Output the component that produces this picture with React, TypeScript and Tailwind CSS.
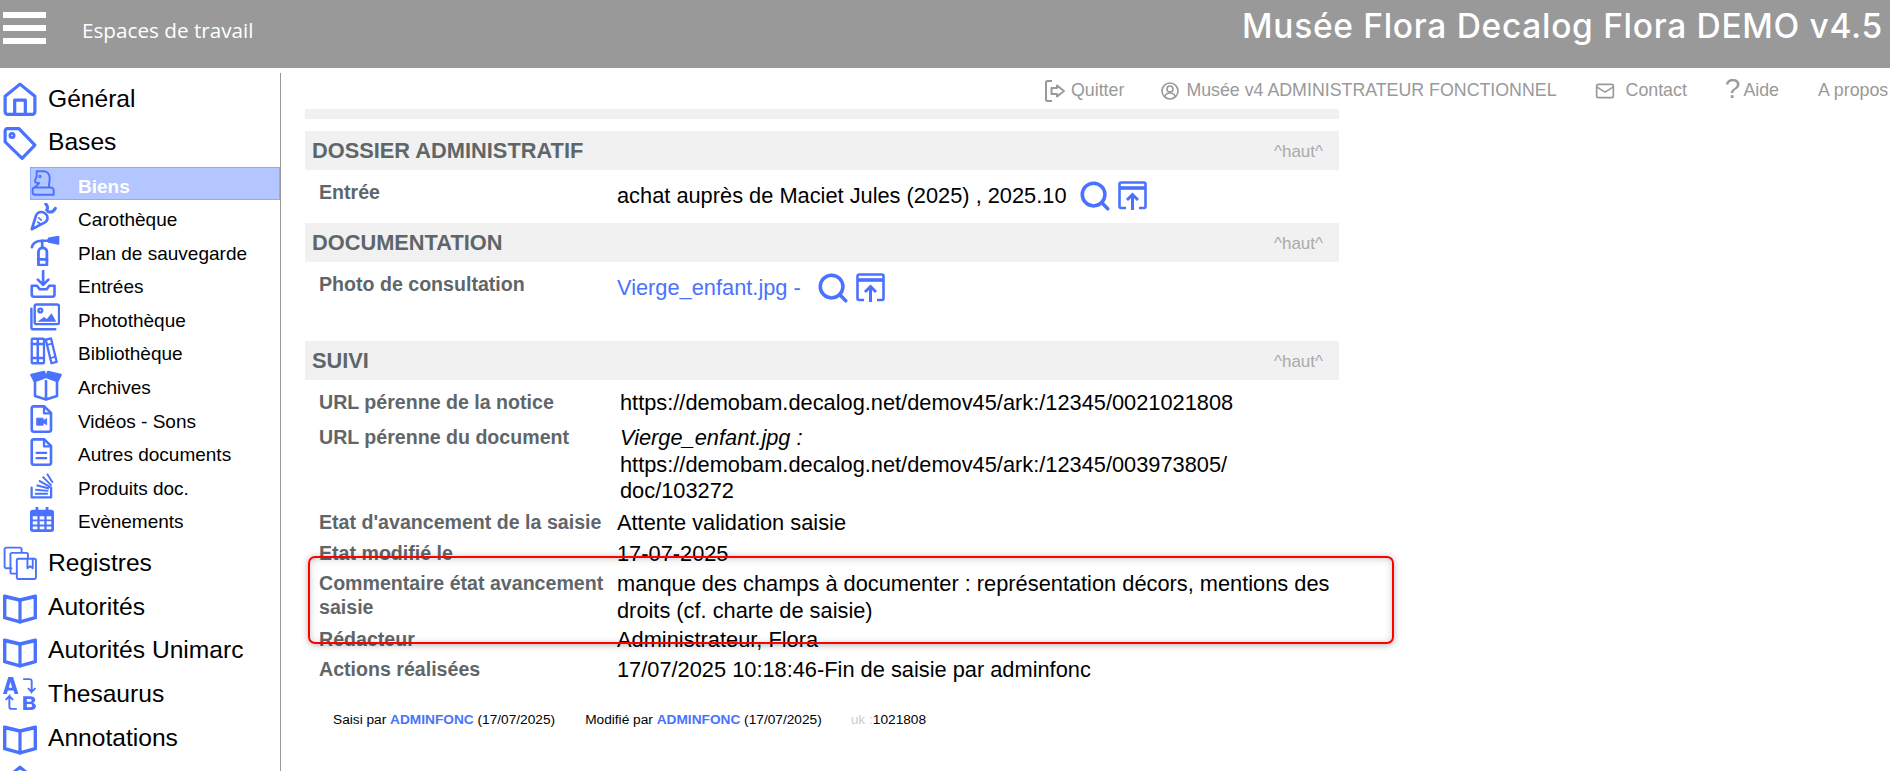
import type { ReactNode } from "react";
import { Mail, Search } from "lucide-react";

const blue = "#4a72ff";

function Ico({ size, children, cls = "" }: { size: number; children: ReactNode; cls?: string }) {
  return (
    <svg
      width={size}
      height={size}
      viewBox="0 0 32 32"
      fill="none"
      stroke={blue}
      strokeWidth="2.6"
      strokeLinejoin="round"
      strokeLinecap="round"
      className={cls}
    >
      {children}
    </svg>
  );
}

const HomeIcon = (
  <Ico size={34}>
    <path d="M2 13.5 16 2l14 11.5V28a2.5 2.5 0 0 1-2.5 2.5h-23A2.5 2.5 0 0 1 2 28z" strokeWidth="3" />
    <path d="M11 30V17h10v13" strokeWidth="3" />
  </Ico>
);
const TagIcon = (
  <Ico size={34}>
    <path d="M2 4.5A2 2 0 0 1 4 2.5h11l15 15.500L18 30.500 2 15z" strokeWidth="3" />
    <circle cx="8.500" cy="9" r="2" />
  </Ico>
);
const BookIcon = (
  <Ico size={34}>
    <path d="M1.500 6 16 9.500 30.500 6v20L16 30 1.500 26z" strokeWidth="3.400" />
    <path d="M16 9.500V30" strokeWidth="3" />
  </Ico>
);
const RegistresIcon = (
  <Ico size={34}>
    <path d="M8 21H3a1.500 1.500 0 0 1-1.500-1.500V3A1.500 1.500 0 0 1 3 1.500h13a1.500 1.500 0 0 1 1.500 1.500v3" strokeWidth="1.800" />
    <path d="M13 26H8.500A1.500 1.500 0 0 1 7 24.500V8a1.500 1.500 0 0 1 1.500-1.500H22A1.500 1.500 0 0 1 23.500 8v3" strokeWidth="1.800" />
    <rect x="13" y="12" width="18" height="19" rx="1.500" strokeWidth="1.800" />
    <path d="M23 12v9l2.500-2 2.500 2v-9" strokeWidth="1.800" />
  </Ico>
);
const ThesaurusIcon = (
  <svg width="34" height="34" viewBox="0 0 32 32" fill={blue}>
    <path d="M0 15 5-1h4.500l5 16h-3.600l-.9-3.200H4.500L3.600 15zm5.400-6h3.200L7 3.500z" transform="translate(0 1)" />
    <path d="M19 2h6c1.500 0 2 .8 2 2v10l3.500-3.500M27 14l-3.500-3.500" fill="none" stroke={blue} strokeWidth="1.800" />
    <path d="M13 30H8c-1.500 0-2-.8-2-2V18l-3.500 3.500M6 18l3.500 3.500" fill="none" stroke={blue} strokeWidth="1.800" />
    <path d="M19 31V18h6.500c3 0 4.800 1.300 4.800 3.500 0 1.400-.8 2.400-2 2.900 1.600.4 2.700 1.600 2.700 3.200 0 2.200-1.800 3.400-4.800 3.400zm3.400-7.600h2.600c1.200 0 1.900-.5 1.900-1.400s-.7-1.300-1.900-1.300h-2.600zm0 5h3c1.300 0 2.100-.5 2.100-1.500s-.8-1.500-2.100-1.500h-3z" />
  </svg>
);

const subIcons: Record<string, ReactNode> = {
  biens: (
    <Ico size={26} cls="-ml-px">
      <path d="M5 21c2-2 4-3 5-5-3 .5-5-1-5-2 0-3 2-5 2-7V1.500h8C20 1.500 23 5 23 10c0 4-1 7.500-1 11" strokeWidth="2.400" />
      <circle cx="11" cy="8" r=".8" />
      <path d="M5 30.500h23v-5a4 4 0 0 0-4-4H5a3 3 0 0 0-3 3v3a3 3 0 0 0 3 3z" strokeWidth="2.400" />
    </Ico>
  ),
  carotte: (
    <Ico size={28}>
      <path d="M2 30 7 14c2-4 7-5 10.500-2s3.500 8-1 10.500z" strokeWidth="3" />
      <path d="M10 17l3 2.500M9 22l3 2" strokeWidth="2" />
      <path d="M19 8c2-2 1-5-1-7M21 10c3 1 6 0 8-4" strokeWidth="3.400" />
    </Ico>
  ),
  extincteur: (
    <Ico size={30}>
      <path d="M9 31V17a4.500 4.500 0 0 1 9 0v14z" strokeWidth="3" />
      <path d="M9 25h9" strokeWidth="3" />
      <path d="M2 12c1-5 5-7 11-7v6" strokeWidth="2.800" />
      <path d="M13 5h8" strokeWidth="2.800" />
      <path d="M20 3l10-2v7l-10-2z" fill={blue} />
    </Ico>
  ),
  entrees: (
    <Ico size={28}>
      <path d="M15 1v16M9 11l6 6 6-6" strokeWidth="3" />
      <path d="M2 18v10a2.500 2.500 0 0 0 2.500 2.500h21A2.500 2.500 0 0 0 28 28V18h-6l-3 4h-8l-3-4z" strokeWidth="3" />
    </Ico>
  ),
  photo: (
    <Ico size={30}>
      <rect x="5" y="1.500" width="26" height="21" rx="2" />
      <path d="M1.500 6v20a2 2 0 0 0 2 2H27" />
      <circle cx="11" cy="8" r="2" />
      <path d="m8 20 7-5 3 2 5-6 5 9z" fill={blue} stroke="none" />
    </Ico>
  ),
  biblio: (
    <Ico size={28}>
      <rect x="2" y="2" width="7" height="28" rx="1" />
      <rect x="9" y="2" width="7" height="28" rx="1" />
      <path d="M2 8h14M2 24h14" />
      <path d="m18 3 6-1.500L30.500 28.500l-6 1.500z" />
      <path d="m19.500 9 6-1.500M24 24l5-1.500" strokeWidth="2" />
    </Ico>
  ),
  archives: (
    <Ico size={32}>
      <path d="M5 13v14l11 3.500L27 27V13M16 12v18" />
      <path d="M1.500 6 14 3l1.500 5-11 4zM30.500 6 18 3l-1.500 5 11 4z" fill={blue} />
    </Ico>
  ),
  video: (
    <Ico size={28}>
      <path d="M4 1.500h12L24 9v19a2.500 2.500 0 0 1-2.500 2.500h-17A2.500 2.500 0 0 1 2 28V4a2.500 2.500 0 0 1 2-2.500z" strokeWidth="3" />
      <path d="M16 2v7.500h8" strokeWidth="2.600" />
      <path d="M8 15h7v8H8zM15 18l4-2.500v7L15 20z" fill={blue} stroke={blue} strokeWidth="1" />
    </Ico>
  ),
  autres: (
    <Ico size={28}>
      <path d="M4 1.500h12L24 9v19a2.500 2.500 0 0 1-2.500 2.500h-17A2.500 2.500 0 0 1 2 28V4a2.500 2.500 0 0 1 2-2.500z" strokeWidth="3" />
      <path d="M16 2v7.500h8" strokeWidth="2.600" />
      <path d="M7.500 17h11M7.500 23h11" strokeWidth="2.600" />
    </Ico>
  ),
  produits: (
    <Ico size={26}>
      <path d="M2 18v12h24V18" strokeWidth="2.800" />
      <path d="M6 25.500h16M6.500 20.500l16 1.500M8 15l15.500 4M11 9.500l14 8M15.500 4.500l11 11M21 1l7 11" strokeWidth="2.400" strokeLinecap="butt" />
    </Ico>
  ),
  events: (
    <svg width="24" height="27" viewBox="0 0 26 27" fill={blue}>
      <path d="M6 0h3v4H6zM17 0h3v4h-3z" />
      <path fillRule="evenodd" d="M3 3h20a3 3 0 0 1 3 3v18a3 3 0 0 1-3 3H3a3 3 0 0 1-3-3V6a3 3 0 0 1 3-3zM3 10v3.500h5V10zm7.500 0v3.500h5V10zM18 10v3.500h5V10zM3 15.500V19h5v-3.500zm7.500 0V19h5v-3.500zm7.500 0V19h5v-3.500zM3 21v3h5v-3zm7.500 0v3h5v-3zm7.500 0v3h5v-3z" />
    </svg>
  ),
};

const subItems = [
  { key: "biens", label: "Biens", active: true },
  { key: "carotte", label: "Carothèque" },
  { key: "extincteur", label: "Plan de sauvegarde" },
  { key: "entrees", label: "Entrées" },
  { key: "photo", label: "Photothèque" },
  { key: "biblio", label: "Bibliothèque" },
  { key: "archives", label: "Archives" },
  { key: "video", label: "Vidéos - Sons" },
  { key: "autres", label: "Autres documents" },
  { key: "produits", label: "Produits doc." },
  { key: "events", label: "Evènements" },
];

function MainItem({ icon, label }: { icon: ReactNode; label: string }) {
  return (
    <div className="flex h-[43.8px] items-center pl-[3px]">
      <span className="flex w-[45px] shrink-0 items-center">{icon}</span>
      <span className="text-[24.6px] leading-none text-black">{label}</span>
    </div>
  );
}

function OpenBoxIcon() {
  return (
    <svg width="29" height="29" viewBox="0 0 29 29" fill="none" stroke={blue} strokeWidth="2.600">
      <path d="M8 27H3a1.500 1.500 0 0 1-1.500-1.500V3A1.500 1.500 0 0 1 3 1.500h23A1.500 1.500 0 0 1 27.500 3v22.500A1.500 1.500 0 0 1 26 27h-5" />
      <path d="M1.500 7h26" strokeWidth="3.600" />
      <path d="M14.500 29V14M9 19l5.500-5.500L20 19" strokeWidth="3" />
    </svg>
  );
}

function DocActions() {
  return (
    <span className="flex items-center gap-[6px] pb-[2px]">
      <Search size={34} color={blue} strokeWidth={2.500} />
      <OpenBoxIcon />
    </span>
  );
}

function SectionBar({ title }: { title: string }) {
  return (
    <div className="flex h-[39px] items-center justify-between bg-[#f1f1f1] pl-[7px] pr-[16px]">
      <span className="pt-[1px] text-[21.8px] font-bold text-[#5f6669]">{title}</span>
      <span className="pt-[2px] text-[17px] text-[#aaaaaa]">^haut^</span>
    </div>
  );
}

function Row({ label, children, cls }: { label: ReactNode; children: ReactNode; cls: string }) {
  return (
    <div className={`grid grid-cols-[298px_1fr] pl-[14px] ${cls}`}>
      <div className="whitespace-nowrap text-[19.6px] font-bold leading-[24px] text-[#5f6669]">{label}</div>
      <div className="text-[21.8px] leading-[26.500px] text-black">{children}</div>
    </div>
  );
}

export default function App() {
  return (
    <div
      className="relative flex h-screen w-full flex-col overflow-hidden bg-white"
      style={{ fontFamily: '"Liberation Sans", Arial, sans-serif' }}
    >
      <header className="flex h-[68px] shrink-0 items-start bg-[#999999] text-white">
        <div className="mt-[12px] ml-[3px] flex w-[43px] flex-col gap-[7px]">
          <div className="h-[6px] bg-white" />
          <div className="h-[6px] bg-white" />
          <div className="h-[6px] bg-white" />
        </div>
        <div className="mt-[16px] ml-[36px] text-[20.7px] leading-[28px]" style={{ fontFamily: '"Open Sans", sans-serif' }}>
          Espaces de travail
        </div>
        <div className="ml-auto mt-[6px] pr-[7px] text-[33.5px] font-medium leading-[40px] tracking-[0.7px]" style={{ fontFamily: "Inter, sans-serif" }}>
          Musée Flora Decalog Flora DEMO v4.5
        </div>
      </header>

      <div className="flex min-h-0 flex-1">
        <aside className="mt-[5px] w-[281px] shrink-0 overflow-hidden border-r border-[#999999] pt-[4px]">
          <MainItem icon={HomeIcon} label="Général" />
          <MainItem icon={TagIcon} label="Bases" />
          <div className="mt-[2px]">
            {subItems.map((s) =>
              s.active ? (
                <div key={s.key} className="ml-[30px] flex h-[33.600px] items-center border border-[#8ca8ff] bg-[#b3c6ff] pl-[1px]">
                  <span className="flex w-[46px] shrink-0 justify-start">{subIcons[s.key]}</span>
                  <span className="pt-[6px] text-[19px] font-bold leading-none text-white">{s.label}</span>
                </div>
              ) : (
                <div key={s.key} className="ml-[30px] flex h-[33.600px] items-center">
                  <span className="flex w-[48px] shrink-0 justify-start">{subIcons[s.key]}</span>
                  <span className="pt-[5px] text-[19px] leading-none text-black">{s.label}</span>
                </div>
              ),
            )}
          </div>
          <div className="mt-[5px]">
            <MainItem icon={RegistresIcon} label="Registres" />
            <MainItem icon={BookIcon} label="Autorités" />
            <MainItem icon={BookIcon} label="Autorités Unimarc" />
            <MainItem icon={ThesaurusIcon} label="Thesaurus" />
            <MainItem icon={BookIcon} label="Annotations" />
            <MainItem icon={HomeIcon} label="" />
          </div>
        </aside>

        <main className="min-w-0 flex-1 overflow-hidden">
          <nav className="flex h-[41px] items-center whitespace-nowrap pl-[763px] pt-[4px] text-[17.8px] text-[#999999]">
            <span className="flex items-center">
              <svg width="24" height="24" viewBox="0 0 24 24" fill="none" stroke="#999999" strokeWidth="2" strokeLinejoin="round" className="mr-[3px]">
                <path d="M8 2H3.500A1.500 1.500 0 0 0 2 3.500v17A1.500 1.500 0 0 0 3.500 22H8" />
                <path d="M13 6.500 20 12l-7 5.500V15H7.500V9H13z" />
              </svg>
              Quitter
            </span>
            <span className="ml-[37px] flex items-center">
              <svg width="18" height="18" viewBox="0 0 18 18" fill="none" stroke="#999999" strokeWidth="1.600" className="mr-[7px]">
                <circle cx="9" cy="9" r="8" />
                <circle cx="9" cy="7" r="3" />
                <path d="M3.500 15c1-3 3-4 5.500-4s4.500 1 5.500 4" />
              </svg>
              Musée v4 ADMINISTRATEUR FONCTIONNEL
            </span>
            <span className="ml-[38px] flex items-center">
              <Mail size={20} color="#999999" strokeWidth={2} className="mr-[11px]" />
              Contact
            </span>
            <span className="ml-[38px] flex items-center">
              <span className="-mt-[4px] mr-[3px] text-[28px] font-light leading-none">?</span>
              Aide
            </span>
            <span className="ml-[39px]">A propos</span>
          </nav>

          <div className="ml-[24px] w-[1034px]">
            <div className="h-[10px] bg-[#f1f1f1]" />

            <div className="mt-[12px]">
              <SectionBar title="DOSSIER ADMINISTRATIF" />
            </div>
            <div className="grid h-[53px] grid-cols-[298px_1fr] pl-[14px]">
              <div className="pt-[10px] text-[19.6px] font-bold leading-[24px] text-[#5f6669]">Entrée</div>
              <div className="flex items-center gap-[11px] text-[21.8px] text-black">
                <span>achat auprès de Maciet Jules (2025) , 2025.10</span>
                <DocActions />
              </div>
            </div>

            <SectionBar title="DOCUMENTATION" />
            <div className="grid h-[79px] grid-cols-[298px_1fr] pl-[14px]">
              <div className="pt-[10px] text-[19.6px] font-bold leading-[24px] text-[#5f6669]">Photo de consultation</div>
              <div className="flex h-[53px] items-center gap-[15px] text-[21.8px] text-[#4a72ff]">
                <span>Vierge_enfant.jpg -</span>
                <DocActions />
              </div>
            </div>

            <SectionBar title="SUIVI" />
            <Row label="URL pérenne de la notice" cls="mt-[10px]">
              <div className="pl-[3px]">https://demobam.decalog.net/demov45/ark:/12345/0021021808</div>
            </Row>
            <Row label="URL pérenne du document" cls="mt-[8.500px]">
              <div className="pl-[3px]">
                <i>Vierge_enfant.jpg :</i>
                <br />
                https://demobam.decalog.net/demov45/ark:/12345/003973805/
                <br />
                doc/103272
              </div>
            </Row>
            <Row label="Etat d'avancement de la saisie" cls="mt-[5.500px]">
              Attente validation saisie
            </Row>
            <Row label="Etat modifié le" cls="mt-[4.500px]">
              17-07-2025
            </Row>
            <Row
              label={
                <>
                  Commentaire état avancement
                  <br />
                  saisie
                </>
              }
              cls="mt-[3.500px]"
            >
              manque des champs à documenter : représentation décors, mentions des
              <br />
              droits (cf. charte de saisie)
            </Row>
            <Row label="Rédacteur" cls="mt-[3px]">
              Administrateur, Flora
            </Row>
            <Row label="Actions réalisées" cls="mt-[3.500px]">
              17/07/2025 10:18:46-Fin de saisie par adminfonc
            </Row>

            <div className="mt-[26px] flex pl-[28px] text-[13.7px] leading-[20px] text-black">
              <span>
                Saisi par <b className="text-[#4a72ff]">ADMINFONC</b> (17/07/2025)
              </span>
              <span className="ml-[30px]">
                Modifié par <b className="text-[#4a72ff]">ADMINFONC</b> (17/07/2025)
              </span>
              <span className="ml-[29px]">
                <span className="text-[#cccccc]">uk :</span>1021808
              </span>
            </div>
          </div>
        </main>
      </div>

      {/* annotation drawn over the screenshot */}
      <div className="pointer-events-none absolute left-[308px] top-[556px] h-[88px] w-[1086px] rounded-[7px] border-2 border-[#ff0000] shadow-[0_1px_7px_rgba(0,0,0,0.3),inset_0_1px_7px_rgba(0,0,0,0.2)]" />
    </div>
  );
}
